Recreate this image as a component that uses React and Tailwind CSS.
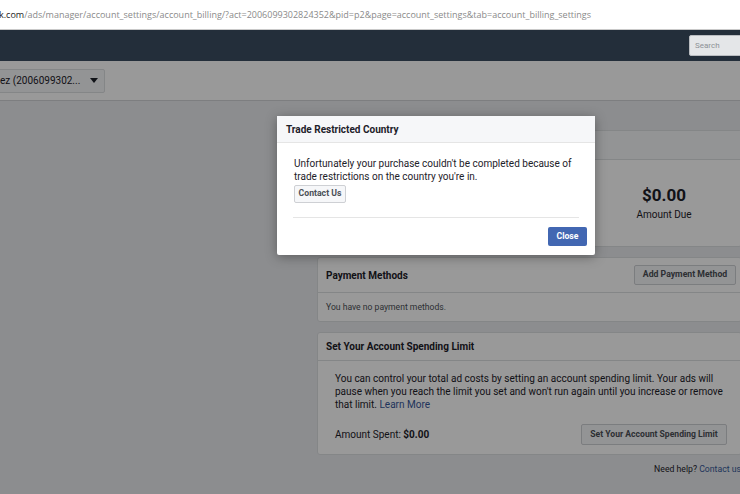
import React from "react";

export default function App() {
  return (
    <div className="w-[740px] h-[494px] overflow-hidden bg-[#e9ebee] font-[Roboto,sans-serif] text-[#1d2129]">
      {/* URL bar */}
      <div className="h-[30px] bg-white border-b border-[#c9c9c9] flex items-center">
        <div className="font-['Open_Sans',sans-serif] text-[9px] whitespace-nowrap text-[#8a8a8a] -ml-[1px]">
          <span className="text-[#222]">k.com</span>/ads/manager/account_settings/account_billing/?act=2006099302824352&amp;pid=p2&amp;page=account_settings&amp;tab=account_billing_settings
        </div>
      </div>
      {/* Nav */}
      <div className="h-[31px] bg-[#232e3a] flex items-center justify-end">
        <div className="w-[56px] h-[21px] -mr-[5px] bg-[#e4e6e8] border border-[#b9bcc0] rounded-[2px] flex items-center pl-[5px] text-[8px] text-[#8d9196]">
          Search
        </div>
      </div>
      {/* Main */}
      <div className="relative h-[433px]">
        <div className="h-[40px] bg-white border-b border-[#d0d2d6] flex items-center">
          <div className="h-[24px] w-[116px] -ml-[11px] bg-[#f6f7f9] border border-[#dddfe2] rounded-[2px] flex items-center pl-[10px] text-[10px] text-[#1d2129] whitespace-nowrap">
            <span>ez (2006099302...</span>
            <svg className="ml-[10px]" width="8" height="5" viewBox="0 0 8 5"><path d="M0 0h8L4 5z" fill="#1d2129" /></svg>
          </div>
        </div>
        <div className="flex">
          <div className="w-[317px] shrink-0" />
          <div className="w-[425px] shrink-0 pt-[29px] flex flex-col">
            {/* Card 1 */}
            <div className="bg-white border border-[#dddfe2] rounded-[3px]">
              <div className="h-[29px] border-b border-[#dddfe2] bg-[#f6f7f9]" />
              <div className="h-[86px] flex justify-end items-center">
                <div className="w-[154px] text-center">
                  <div className="text-[17px] font-bold leading-[20px]">$0.00</div>
                  <div className="text-[10px] leading-[12px] mt-[4px]">Amount Due</div>
                </div>
              </div>
            </div>
            {/* Card 2 */}
            <div className="mt-[10px] bg-white border border-[#dddfe2] rounded-[3px]">
              <div className="h-[35px] border-b border-[#dddfe2] flex items-center justify-between pl-[8px] pr-[5px]">
                <div className="text-[10px] font-bold">Payment Methods</div>
                <div className="h-[20px] w-[102px] bg-[#f6f7f9] border border-[#ced0d4] rounded-[2px] flex items-center justify-center text-[8.7px] font-bold text-[#4b4f56]">
                  Add Payment Method
                </div>
              </div>
              <div className="h-[28px] flex items-center pl-[8px] text-[8.6px] text-[#4b4f56]">
                You have no payment methods.
              </div>
            </div>
            {/* Card 3 */}
            <div className="mt-[10px] bg-white border border-[#dddfe2] rounded-[3px]">
              <div className="h-[28px] border-b border-[#dddfe2] flex items-center pl-[8px]">
                <div className="text-[10px] font-bold">Set Your Account Spending Limit</div>
              </div>
              <div className="pl-[17px] pr-[14px] pt-[11px] pb-[9px]">
                <div className="text-[10px] leading-[13px] text-[#1d2129]">
                  You can control your total ad costs by setting an account spending limit. Your ads will pause when you reach the limit you set and won't run again until you increase or remove that limit. <span className="text-[#365899]">Learn More</span>
                </div>
                <div className="flex items-center justify-between mt-[13px]">
                  <div className="text-[10px]">Amount Spent: <span className="font-bold">$0.00</span></div>
                  <div className="h-[21px] w-[146px] bg-[#f6f7f9] border border-[#ced0d4] rounded-[2px] flex items-center justify-center text-[8.6px] font-bold text-[#4b4f56]">
                    Set Your Account Spending Limit
                  </div>
                </div>
              </div>
            </div>
            <div className="mt-[8px] text-right text-[8.7px] pr-[1px]">
              Need help? <span className="text-[#365899]">Contact us</span>
            </div>
          </div>
        </div>
        {/* Overlay */}
        <div className="absolute inset-0 bg-black/40" />
        {/* Modal */}
        <div className="absolute left-[277px] top-[55px] w-[318px] bg-white rounded-[2px] shadow-[0_2px_12px_rgba(0,0,0,0.35)]">
          <div className="h-[27px] bg-[#f6f7f9] border-b border-[#e5e5e5] flex items-center pl-[9px] text-[10px] font-bold">
            Trade Restricted Country
          </div>
          <div className="px-[16px]">
            <div className="pt-[14px] pl-[1px] text-[10px] leading-[13px]">
              Unfortunately your purchase couldn't be completed because of trade restrictions on the country you're in.
            </div>
            <div className="mt-[2px] pb-[14px] border-b border-[#e5e5e5] flex">
              <div className="flex h-[18px] w-[52px] ml-[1px] bg-[#f6f7f9] border border-[#ced0d4] rounded-[2px] items-center justify-center text-[8.7px] font-bold text-[#4b4f56]">
                Contact Us
              </div>
            </div>
          </div>
          <div className="flex justify-end pt-[9px] pb-[9px] pr-[8px]">
            <div className="h-[19px] w-[39px] bg-[#4267b2] rounded-[2px] flex items-center justify-center text-[8.7px] font-bold text-white">
              Close
            </div>
          </div>
        </div>
      </div>
    </div>
  );
}
